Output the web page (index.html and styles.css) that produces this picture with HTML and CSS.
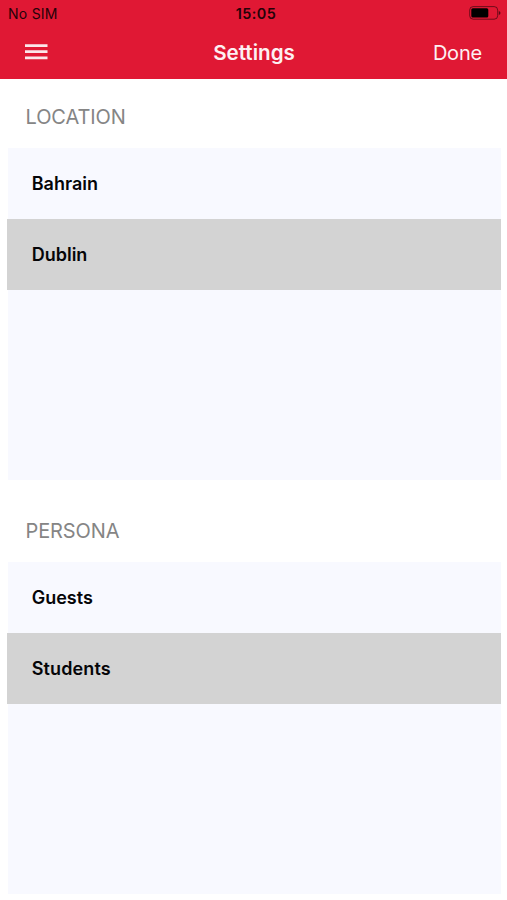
FILE: index.html
```html
<!DOCTYPE html>
<html lang="en">
<head>
<meta charset="utf-8">
<title>Settings</title>
<link rel="stylesheet" href="styles.css">
</head>
<body>
<header class="top">
  <div class="status">
    <span class="carrier">No SIM</span>
    <span class="time">15:05</span>
    <svg class="battery" width="32" height="14" viewBox="0 0 32 14"><rect x=".7" y=".6" width="28" height="12.6" rx="3.5" fill="none" stroke="#000" stroke-opacity=".5"/><rect x="2.3" y="2.2" width="17" height="9.4" rx="1.5"/><path d="M29.8 4.9v4.2q1.7-.6 1.7-2.1t-1.7-2.1" fill-opacity=".6"/></svg>
  </div>
  <div class="nav">
    <svg class="menu" width="23" height="16" viewBox="0 0 23 16"><path d="M0 1.6h22.5M0 7.7h22.5M0 13.8h22.5" stroke="#fbe6ea" stroke-width="2.8"/></svg>
    <h1 class="title">Settings</h1>
    <span class="done">Done</span>
  </div>
</header>
<main>
  <section class="section">
    <h2 class="heading">LOCATION</h2>
    <ul class="list">
      <li class="row">Bahrain</li>
      <li class="row selected">Dublin</li>
    </ul>
  </section>
  <section class="section">
    <h2 class="heading">PERSONA</h2>
    <ul class="list">
      <li class="row">Guests</li>
      <li class="row selected students">Students</li>
    </ul>
  </section>
</main>
</body>
</html>
```
FILE: styles.css
```css
* { box-sizing: border-box; }
body { margin: 0; height: 900px; overflow: hidden; background: #fff; color: #050508; font-family: Inter, "Liberation Sans", sans-serif; }
.top { height: 79px; background: #e01834; }
.status { height: 27px; display: grid; grid-template-columns: 1fr auto 1fr; align-items: center; padding: 0 6px 0 8px; font-size: 14px; color: #250208; }
.carrier { letter-spacing: .25px; }
.time { padding-left: 3px; font-size: 14.4px; font-weight: 600; letter-spacing: .4px; }
.battery { justify-self: end; margin-bottom: 1px; }
.nav { height: 52px; display: grid; grid-template-columns: 1fr auto 1fr; align-items: center; padding: 0 25px; color: #fdf0f2; }
.menu { margin-bottom: 2px; }
.title { margin: 0; padding: 0 0 2px 1px; font-size: 20.6px; font-weight: 600; }
.done { justify-self: end; font-size: 20px; letter-spacing: -.2px; }
.section { height: 414px; padding: 0 6px 0 7px; }
.heading { height: 69px; margin: 0; padding: 7px 0 0 18.5px; display: flex; align-items: center; font-size: 20px; font-weight: 400; letter-spacing: -.1px; color: #858585; }
.list { height: 332px; margin: 0; padding: 0; list-style: none; background: linear-gradient(#f8f9ff, #f8f9ff) 1px 0 / calc(100% - 1px) 100% no-repeat; }
.row { height: 71px; display: flex; align-items: center; padding-left: 24.7px; font-size: 18px; font-weight: 600; }
.row.selected { background: #d3d3d3; }
.row.students { letter-spacing: .12px; }
```
